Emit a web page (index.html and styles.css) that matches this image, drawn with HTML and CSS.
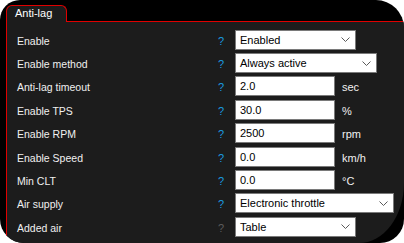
FILE: index.html
```html
<!DOCTYPE html>
<html lang="en">
<head>
    <meta charset="UTF-8">
    <title>Anti-lag</title>
    <link rel="stylesheet" href="styles.css">
</head>
<body>
    <div class="frame">
        <div class="tabs">
            <div class="tab">Anti-lag</div>
        </div>
        <div class="panel">
            <div class="row">
                <span class="label">Enable</span>
                <span class="help">?</span>
                <div class="select w121"><span>Enabled</span><svg class="chev" width="9" height="5" viewBox="0 0 9 5"><polyline points="0.5,0.5 4.5,4.5 8.5,0.5"/></svg></div>
            </div>
            <div class="row">
                <span class="label">Enable method</span>
                <span class="help">?</span>
                <div class="select w142"><span>Always active</span><svg class="chev" width="9" height="5" viewBox="0 0 9 5"><polyline points="0.5,0.5 4.5,4.5 8.5,0.5"/></svg></div>
            </div>
            <div class="row">
                <span class="label">Anti-lag timeout</span>
                <span class="help">?</span>
                <div class="input">2.0</div>
                <span class="unit">sec</span>
            </div>
            <div class="row">
                <span class="label">Enable TPS</span>
                <span class="help">?</span>
                <div class="input">30.0</div>
                <span class="unit">%</span>
            </div>
            <div class="row">
                <span class="label">Enable RPM</span>
                <span class="help">?</span>
                <div class="input">2500</div>
                <span class="unit">rpm</span>
            </div>
            <div class="row">
                <span class="label">Enable Speed</span>
                <span class="help">?</span>
                <div class="input">0.0</div>
                <span class="unit">km/h</span>
            </div>
            <div class="row">
                <span class="label">Min CLT</span>
                <span class="help">?</span>
                <div class="input">0.0</div>
                <span class="unit">°C</span>
            </div>
            <div class="row">
                <span class="label">Air supply</span>
                <span class="help">?</span>
                <div class="select w159"><span>Electronic throttle</span><svg class="chev" width="9" height="5" viewBox="0 0 9 5"><polyline points="0.5,0.5 4.5,4.5 8.5,0.5"/></svg></div>
            </div>
            <div class="row">
                <span class="label">Added air</span>
                <span class="help off">?</span>
                <div class="select w121"><span>Table</span><svg class="chev" width="9" height="5" viewBox="0 0 9 5"><polyline points="0.5,0.5 4.5,4.5 8.5,0.5"/></svg></div>
            </div>
        </div>
    </div>
</body>
</html>
```

FILE: styles.css
```css
body {
    margin: 0;
    background: #fff;
    font-family: "Liberation Sans", Arial, sans-serif;
}

.frame {
    width: 404px;
    height: 243px;
    background: #000;
    border-radius: 20px 28px 24px 24px;
    overflow: hidden;
    display: flex;
    flex-direction: column;
}

.tabs {
    padding: 5px 0 0 6px;
    display: flex;
}

.tab {
    position: relative;
    z-index: 1;
    height: 17px;
    margin-bottom: -1px;
    box-sizing: border-box;
    padding: 0 14px 0 8px;
    background: #1c1c1c;
    border: 1px solid #e00000;
    border-bottom: none;
    border-radius: 6px 6px 0 0;
    color: #fff;
    font-size: 11px;
    line-height: 15px;
}

.panel {
    flex: 1;
    margin-left: 6px;
    background: #1c1c1c;
    border-left: 1px solid #e00000;
    border-top: 1px solid #e00000;
    border-bottom-right-radius: 45px 60px;
    padding: 6px 0 0 10px;
}

.row {
    display: flex;
    align-items: center;
    height: 23.375px;
}

.label {
    width: 195px;
    color: #f0f0f0;
    font-size: 10.5px;
    padding-top: 2px;
}

.help {
    width: 18px;
    margin-right: 5px;
    text-align: center;
    color: #1a9be0;
    font-size: 11px;
    padding-top: 2px;
}
.help.off { color: #5c5c5c; }

.select, .input {
    box-sizing: border-box;
    height: 20px;
    background: #fff;
    border: 1px solid #7a7a7a;
    color: #000;
    font-size: 11px;
    line-height: 18px;
    padding-left: 4px;
}

.select {
    display: flex;
    align-items: center;
    justify-content: space-between;
    padding-right: 5px;
}

.input { width: 100px; }

.w121 { width: 121px; }
.w142 { width: 142px; }
.w159 { width: 159px; }

.chev polyline {
    fill: none;
    stroke: #5a5a5a;
    stroke-width: 1;
}

.unit {
    margin-left: 7px;
    color: #f0f0f0;
    font-size: 11px;
    padding-top: 2px;
}
```
